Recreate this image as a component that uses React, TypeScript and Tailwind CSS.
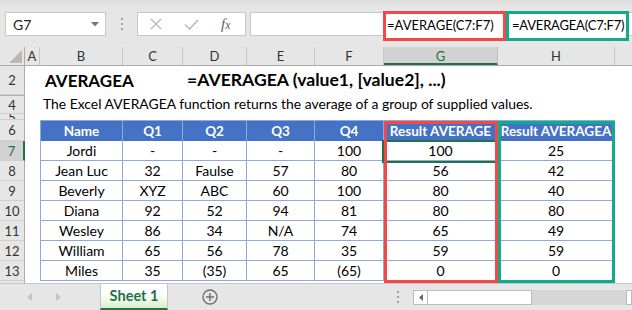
import React from "react";

const COLS: { l: string; w: string }[] = [
  { l: "A", w: "w-[15px]" },
  { l: "B", w: "w-[83px]" },
  { l: "C", w: "w-[60px]" },
  { l: "D", w: "w-[64px]" },
  { l: "E", w: "w-[68px]" },
  { l: "F", w: "w-[69px]" },
  { l: "G", w: "w-[114px]" },
  { l: "H", w: "w-[117px]" },
];

const TW = ["w-[83px]", "w-[60px]", "w-[64px]", "w-[68px]", "w-[69px]", "w-[114px]", "w-[117px]"];

const HEAD = ["Name", "Q1", "Q2", "Q3", "Q4", "Result AVERAGE", "Result AVERAGEA"];
const DATA = [
  ["Jordi", "-", "-", "-", "100", "100", "25"],
  ["Jean Luc", "32", "Faulse", "57", "80", "56", "42"],
  ["Beverly", "XYZ", "ABC", "60", "100", "80", "40"],
  ["Diana", "92", "52", "94", "81", "80", "80"],
  ["Wesley", "86", "34", "N/A", "74", "65", "49"],
  ["William", "65", "56", "78", "35", "59", "59"],
  ["Miles", "35", "(35)", "65", "(65)", "0", "0"],
];

function RowHead({ n, active, extra }: { n: string; active?: boolean; extra?: string }) {
  return (
    <div
      className={
        "w-[25px] shrink-0 flex items-center justify-center overflow-hidden border-b border-[#d0d0d0] text-[13px] " +
        (active
          ? "bg-[#d2d2d2] text-[#217346] border-r-2 border-r-[#217346] "
          : "bg-[#e6e6e6] text-[#333] border-r border-r-[#ababab] ") +
        (extra || "")
      }
    >
      <span className="leading-[20px]">{n}</span>
    </div>
  );
}

export default function App() {
  return (
    <div className="relative w-[632px] h-[310px] overflow-hidden bg-[#e6e6e6] font-['Lato','Liberation_Sans',sans-serif] text-black">
      {/* formula bar */}
      <div className="h-[47px] flex items-start pt-[12px] bg-gradient-to-b from-[#dcdcdc] to-[#e6e6e6] to-[15%]">
        <div className="ml-[5px] w-[101px] h-[24px] bg-white border border-[#c8c8c8] flex items-center justify-between pl-[7px] pr-[6px]">
          <span className="text-[14px] text-[#222]">G7</span>
          <svg width="8" height="5" viewBox="0 0 8 5">
            <path d="M0 0 H8 L4 4.5 Z" fill="#777" />
          </svg>
        </div>
        <div className="w-[31px] h-[24px] flex flex-col items-center justify-center gap-[3px]">
          <span className="w-[2px] h-[2px] bg-[#a0a0a0]" />
          <span className="w-[2px] h-[2px] bg-[#a0a0a0]" />
          <span className="w-[2px] h-[2px] bg-[#a0a0a0]" />
        </div>
        <div className="w-[109px] h-[24px] bg-white border border-[#c8c8c8] flex items-center">
          <svg className="ml-[12px]" width="12" height="12" viewBox="0 0 12 12">
            <path d="M1 1 L11 11 M11 1 L1 11" stroke="#b4b4b4" strokeWidth="1.3" />
          </svg>
          <svg className="ml-[22px]" width="15" height="11" viewBox="0 0 15 11">
            <path d="M1 5.5 L5.5 10 L14 1" stroke="#b4b4b4" strokeWidth="1.4" fill="none" />
          </svg>
          <span className="ml-[22px] font-['Liberation_Serif',serif] italic text-[15px] text-[#606060] leading-none">
            f<span className="text-[12px]">x</span>
          </span>
        </div>
        <div className="ml-[4px] flex-1 h-[24px] bg-white border border-[#c8c8c8] border-r-0" />
      </div>

      {/* column headers */}
      <div className="flex h-[19px] bg-[#e6e6e6] border-b border-[#ababab]">
        <div className="w-[25px] shrink-0 border-r border-[#ababab] flex items-end justify-end pr-[2px] pb-[2px]">
          <svg width="13" height="13" viewBox="0 0 13 13">
            <path d="M13 0 V13 H0 Z" fill="#b8b8b8" />
          </svg>
        </div>
        {COLS.map((c) => (
          <div
            key={c.l}
            className={
              c.w +
              " shrink-0 text-center text-[13px] leading-[19px] " +
              (c.l === "G"
                ? "bg-[#d2d2d2] text-[#217346] border-b-2 border-[#217346] border-r border-r-[#c0c0c0]"
                : "text-[#333] border-r border-[#c6c6c6]")
            }
          >
            {c.l}
          </div>
        ))}
        <div className="flex-1" />
      </div>

      {/* row 2 */}
      <div className="flex h-[29px] bg-white">
        <RowHead n="2" />
        <div className="flex items-center">
          <span className="ml-[20px] w-[142px] font-bold text-[17px] whitespace-nowrap">AVERAGEA</span>
          <span className="font-bold text-[17.6px] whitespace-nowrap">=AVERAGEA (value1, [value2], ...)</span>
        </div>
      </div>

      {/* row 4 (row 3 hidden) */}
      <div className="flex h-[19px] bg-white">
        <RowHead n="4" extra="border-t border-t-[#b0b0b0]" />
        <div className="flex items-center">
          <span className="ml-[18px] text-[13.9px] whitespace-nowrap">
            The Excel AVERAGEA function returns the average of a group of supplied values.
          </span>
        </div>
      </div>

      {/* row 5 */}
      <div className="flex h-[6px] bg-white">
        <RowHead n="5" />
      </div>

      {/* row 6 header */}
      <div className="flex h-[21px] bg-white">
        <RowHead n="6" />
        <div className="w-[15px] shrink-0" />
        {HEAD.map((h, i) => (
          <div
            key={h}
            className={
              TW[i] +
              " shrink-0 bg-[#4472c4] text-white font-bold text-[13.5px] flex items-center justify-center border-t border-r border-[#8ea9db] whitespace-nowrap " +
              (i === 0 ? "border-l" : "")
            }
          >
            {h}
          </div>
        ))}
      </div>

      {/* data rows */}
      {DATA.map((r, ri) => (
        <div key={ri} className="flex h-[20px] bg-white">
          <RowHead n={String(7 + ri)} active={ri === 0} />
          <div className="w-[15px] shrink-0" />
          {r.map((v, i) => (
            <div
              key={i}
              className={
                TW[i] +
                " shrink-0 flex items-center justify-center text-[14px] border-b border-r border-[#8ea9db] whitespace-nowrap " +
                (i === 0 ? "border-l" : "")
              }
            >
              {v}
            </div>
          ))}
        </div>
      ))}

      <div className="flex h-[2px] bg-white">
        <div className="w-[25px] bg-[#e6e6e6] border-r border-[#ababab]" />
      </div>

      {/* sheet tab bar */}
      <div className="h-[27px] border-t border-[#c6c6c6] bg-[#e6e6e6] flex items-center">
        <div className="w-[100px] flex items-center">
          <svg className="ml-[27px]" width="5" height="8" viewBox="0 0 5 8">
            <path d="M5 0 V8 L0 4 Z" fill="#c4c4c4" />
          </svg>
          <svg className="ml-[24px]" width="5" height="8" viewBox="0 0 5 8">
            <path d="M0 0 V8 L5 4 Z" fill="#c4c4c4" />
          </svg>
        </div>
        <div className="w-[68px] h-[26px] self-start bg-gradient-to-b from-white from-40% to-[#d9efc9] border-x border-[#c6c6c6] border-b-2 border-b-[#217346] flex items-center justify-center">
          <span className="font-bold text-[14.5px] text-[#217346]">Sheet 1</span>
        </div>
        <svg className="ml-[34px]" width="16" height="16" viewBox="0 0 16 16">
          <circle cx="8" cy="8" r="7" fill="none" stroke="#707070" strokeWidth="1.4" />
          <path d="M8 4 V12 M4 8 H12" stroke="#707070" strokeWidth="1.4" />
        </svg>
        <div className="ml-[179px] flex flex-col gap-[3px]">
          <span className="w-[2px] h-[2px] bg-[#a0a0a0]" />
          <span className="w-[2px] h-[2px] bg-[#a0a0a0]" />
          <span className="w-[2px] h-[2px] bg-[#a0a0a0]" />
        </div>
        <div className="ml-[14px] flex h-[15px] flex-1">
          <div className="w-[15px] bg-white border border-[#bdbdbd] flex items-center justify-center">
            <svg width="4" height="7" viewBox="0 0 4 7">
              <path d="M4 0 V7 L0 3.5 Z" fill="#666" />
            </svg>
          </div>
          <div className="w-[104px] bg-white border border-l-0 border-[#bdbdbd]" />
          <div className="w-[94px] bg-[#d6d6d6]" />
          <div className="flex-1 bg-white border border-[#bdbdbd]" />
        </div>
      </div>

      {/* overlays */}
      <div className="absolute left-[382px] top-[140px] w-[118px] h-[23px] border-2 border-[#217346]" />
      <div className="absolute left-[384px] top-[121px] w-[114px] h-[162px] border-[3px] border-[#f24848]" />
      <div className="absolute left-[498px] top-[121px] w-[117px] h-[162px] border-[3px] border-[#13a98b]" />

      <div className="absolute left-[383px] top-[11px] w-[123px] h-[30px] border-[3px] border-[#f24848] bg-white flex items-center pl-[1px]">
        <span className="text-[13px] whitespace-nowrap">=AVERAGE(C7:F7)</span>
      </div>
      <div className="absolute left-[506px] top-[11px] w-[123px] h-[30px] border-[3px] border-[#13a98b] bg-white flex items-center pl-[3px]">
        <span className="text-[13px] tracking-[-0.2px] whitespace-nowrap">=AVERAGEA(C7:F7)</span>
      </div>
    </div>
  );
}
